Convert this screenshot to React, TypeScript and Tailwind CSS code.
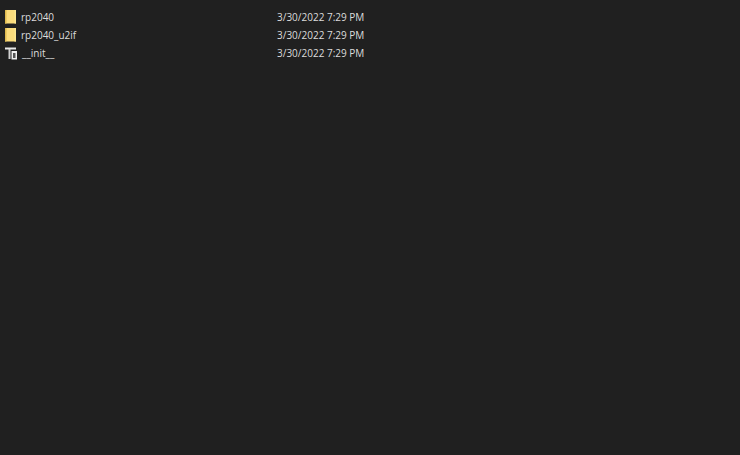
function FolderIcon() {
  return (
    <svg width="12" height="14" viewBox="0 0 12 14" className="shrink-0">
      <rect x="0" y="0" width="11" height="13.5" fill="#fbdc7c" />
      <rect x="0" y="0" width="1.5" height="13.5" fill="#e0b94e" />
      <rect x="9.5" y="0" width="1.5" height="13.5" fill="#fde690" />
    </svg>
  );
}

function PyIcon() {
  return (
    <svg width="13" height="13" viewBox="0 0 13 13" className="shrink-0">
      <rect x="0" y="0.5" width="11" height="2" fill="#e8e8e8" />
      <rect x="3.5" y="2" width="2" height="10" fill="#d0d0d0" />
      <rect x="6.5" y="4" width="5.5" height="8.5" fill="#f0f0f0" />
      <rect x="8" y="6" width="2.5" height="5" fill="#555555" />
    </svg>
  );
}

const rows = [
  { name: "rp2040", icon: <FolderIcon /> },
  { name: "rp2040_u2if", icon: <FolderIcon /> },
  { name: "__init__", icon: <PyIcon /> },
];

export default function App() {
  return (
    <div className="w-[740px] h-[455px] overflow-hidden bg-[#202020] pt-2 text-[10px] text-[#dcdcdc] font-['Open_Sans',sans-serif]">
      {rows.map((row) => (
        <div key={row.name} className="flex items-center h-[18px]">
          <div className="w-[277px] flex items-center gap-[4px] pl-[5px]">
            {row.icon}
            <span>{row.name}</span>
          </div>
          <span>3/30/2022 7:29 PM</span>
        </div>
      ))}
    </div>
  );
}
